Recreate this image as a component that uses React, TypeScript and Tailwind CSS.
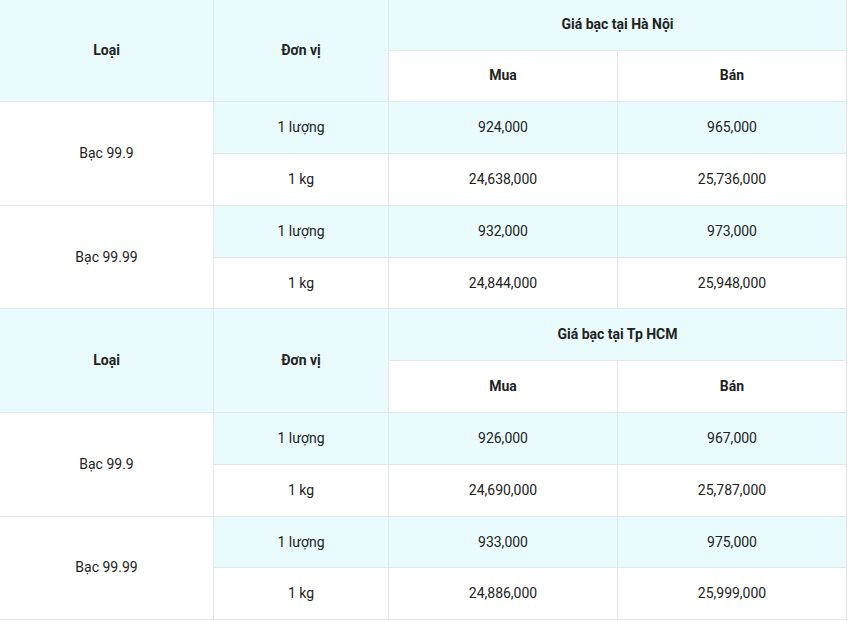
import React from "react";

const cyan = "bg-[#e9fbfd]";
const bd = "border border-[#e2e8ea]";

type Row = { loai: string; items: { unit: string; mua: string; ban: string }[] };

const groups: { city: string; rows: Row[] }[] = [
  {
    city: "Giá bạc tại Hà Nội",
    rows: [
      { loai: "Bạc 99.9", items: [{ unit: "1 lượng", mua: "924,000", ban: "965,000" }, { unit: "1 kg", mua: "24,638,000", ban: "25,736,000" }] },
      { loai: "Bạc 99.99", items: [{ unit: "1 lượng", mua: "932,000", ban: "973,000" }, { unit: "1 kg", mua: "24,844,000", ban: "25,948,000" }] },
    ],
  },
  {
    city: "Giá bạc tại Tp HCM",
    rows: [
      { loai: "Bạc 99.9", items: [{ unit: "1 lượng", mua: "926,000", ban: "967,000" }, { unit: "1 kg", mua: "24,690,000", ban: "25,787,000" }] },
      { loai: "Bạc 99.99", items: [{ unit: "1 lượng", mua: "933,000", ban: "975,000" }, { unit: "1 kg", mua: "24,886,000", ban: "25,999,000" }] },
    ],
  },
];

export default function App() {
  return (
    <div className="w-[850px] h-[622px] bg-white overflow-hidden" style={{ fontFamily: "Roboto, 'Noto Sans', sans-serif" }}>
      <table className="border-collapse w-[847px] table-fixed text-[14px] text-[#222] text-center -mt-px -ml-px">
        <colgroup>
          <col className="w-[214px]" />
          <col className="w-[175px]" />
          <col className="w-[229px]" />
          <col className="w-[229px]" />
        </colgroup>
        <tbody>
          {groups.map((g, gi) => (
            <React.Fragment key={gi}>
              <tr className={gi === 0 ? "h-[50.5px]" : "h-[51.8px]"}>
                <td rowSpan={2} className={`${bd} ${cyan} font-bold`}>Loại</td>
                <td rowSpan={2} className={`${bd} ${cyan} font-bold`}>Đơn vị</td>
                <td colSpan={2} className={`${bd} ${cyan} font-bold`}>{g.city}</td>
              </tr>
              <tr className="h-[51.8px]">
                <td className={`${bd} bg-white font-bold`}>Mua</td>
                <td className={`${bd} bg-white font-bold`}>Bán</td>
              </tr>
              {g.rows.map((r, ri) =>
                r.items.map((it, ii) => (
                  <tr key={`${ri}-${ii}`} className="h-[51.8px]">
                    {ii === 0 && (
                      <td rowSpan={2} className={`${bd} bg-white`}>{r.loai}</td>
                    )}
                    <td className={`${bd} ${ii === 0 ? cyan : "bg-white"}`}>{it.unit}</td>
                    <td className={`${bd} ${ii === 0 ? cyan : "bg-white"}`}>{it.mua}</td>
                    <td className={`${bd} ${ii === 0 ? cyan : "bg-white"}`}>{it.ban}</td>
                  </tr>
                ))
              )}
            </React.Fragment>
          ))}
        </tbody>
      </table>
    </div>
  );
}
